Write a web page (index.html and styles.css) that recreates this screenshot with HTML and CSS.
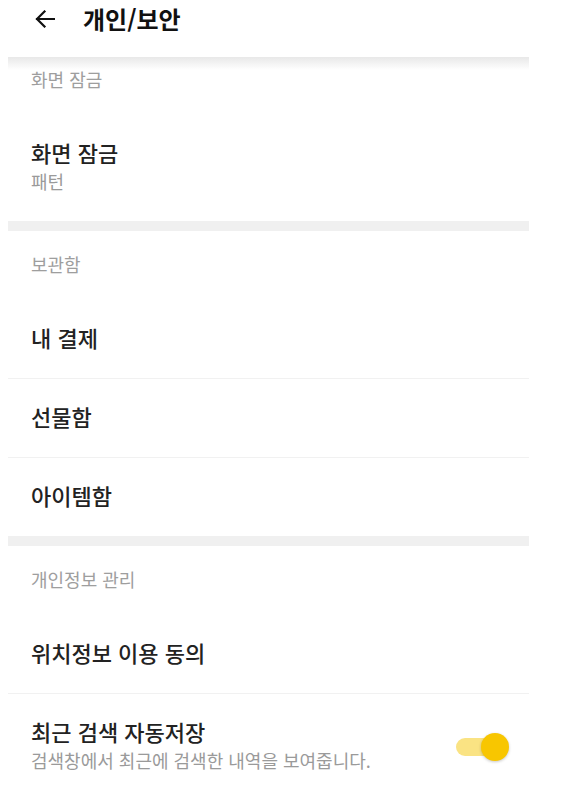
FILE: index.html
```html
<!DOCTYPE html>
<html lang="ko">
<head>
    <meta charset="UTF-8">
    <meta name="viewport" content="width=device-width, initial-scale=1.0">
    <title>개인/보안</title>
    <link rel="stylesheet" href="styles.css">
</head>
<body>

    <div class="app">
        <!-- Toolbar -->
        <header class="toolbar">
            <a class="back" href="#">
                <svg width="20" height="18" viewBox="0 0 20 18">
                    <path d="M19 9H2M9.5 1.5L2 9l7.5 7.5" fill="none" stroke="#111" stroke-width="2.2" stroke-linecap="square"/>
                </svg>
            </a>
            <h1 class="toolbar-title">개인/보안</h1>
        </header>

        <!-- 화면 잠금 -->
        <section class="group">
            <div class="group-title group-title-first">화면 잠금</div>
            <div class="item item-two">
                <div class="item-text">
                    <div class="item-title">화면 잠금</div>
                    <div class="item-sub">패턴</div>
                </div>
            </div>
        </section>

        <div class="gap"></div>

        <!-- 보관함 -->
        <section class="group">
            <div class="group-title">보관함</div>
            <div class="item"><div class="item-title">내 결제</div></div>
            <div class="item"><div class="item-title">선물함</div></div>
            <div class="item"><div class="item-title">아이템함</div></div>
        </section>

        <div class="gap"></div>

        <!-- 개인정보 관리 -->
        <section class="group">
            <div class="group-title">개인정보 관리</div>
            <div class="item"><div class="item-title">위치정보 이용 동의</div></div>
            <div class="item item-two">
                <div class="item-text">
                    <div class="item-title">최근 검색 자동저장</div>
                    <div class="item-sub">검색창에서 최근에 검색한 내역을 보여줍니다.</div>
                </div>
                <div class="switch on">
                    <span class="switch-track"></span>
                    <span class="switch-thumb"></span>
                </div>
            </div>
        </section>
    </div>

</body>
</html>
```

FILE: styles.css
```css
/* General Styling */
* {
    box-sizing: border-box;
}

body {
    margin: 0;
    padding: 0;
    background: #ffffff;
    font-family: "Noto Sans CJK KR", "Noto Sans", sans-serif;
    color: #1e1e1e;
}

.app {
    width: 521px;
    margin-left: 8px;
}

/* Toolbar */
.toolbar {
    position: relative;
    z-index: 1;
    height: 57px;
    padding: 0 0 19px 27px;
    display: flex;
    align-items: center;
    background: #ffffff;
}

.toolbar::after {
    content: "";
    position: absolute;
    left: 0;
    right: 0;
    top: 100%;
    height: 13px;
    background: linear-gradient(#e8e8e8, rgba(255, 255, 255, 0));
}

.back {
    display: flex;
    width: 20px;
    height: 18px;
}

.toolbar-title {
    margin: 0 0 0 28px;
    font-size: 24px;
    font-weight: bold;
    line-height: 32px;
    color: #111111;
}

/* Groups */
.group-title {
    height: 69px;
    padding: 0 0 4px 23px;
    display: flex;
    align-items: center;
    font-size: 18px;
    color: #9e9e9e;
}

.group-title-first {
    height: 58px;
    padding-bottom: 14px;
}

.gap {
    height: 10px;
    background: #f0f0f0;
}

.item {
    height: 79px;
    padding: 0 20px 4px 23px;
    display: flex;
    align-items: center;
    justify-content: space-between;
    border-top: 1px solid #f1f1f1;
}

.group-title + .item {
    height: 78px;
    border-top: none;
}

.item-two {
    height: 107px;
    padding-bottom: 6px;
}

.group-title + .item-two {
    height: 106px;
}

.item-title {
    font-size: 22px;
    font-weight: 500;
    line-height: 28px;
    color: #222222;
}

.item-sub {
    margin-top: 3px;
    font-size: 18px;
    line-height: 24px;
    color: #9a9a9a;
}

/* Switch */
.switch {
    position: relative;
    width: 53px;
    height: 28px;
    flex-shrink: 0;
    margin-top: 6px;
}

.switch-track {
    position: absolute;
    left: 0;
    top: 5px;
    width: 46px;
    height: 18px;
    border-radius: 9px;
    background: #fae383;
}

.switch-thumb {
    position: absolute;
    right: 0;
    top: 0;
    width: 28px;
    height: 28px;
    border-radius: 50%;
    background: #f8c600;
    box-shadow: 0 1px 3px rgba(0, 0, 0, 0.22);
}
```
